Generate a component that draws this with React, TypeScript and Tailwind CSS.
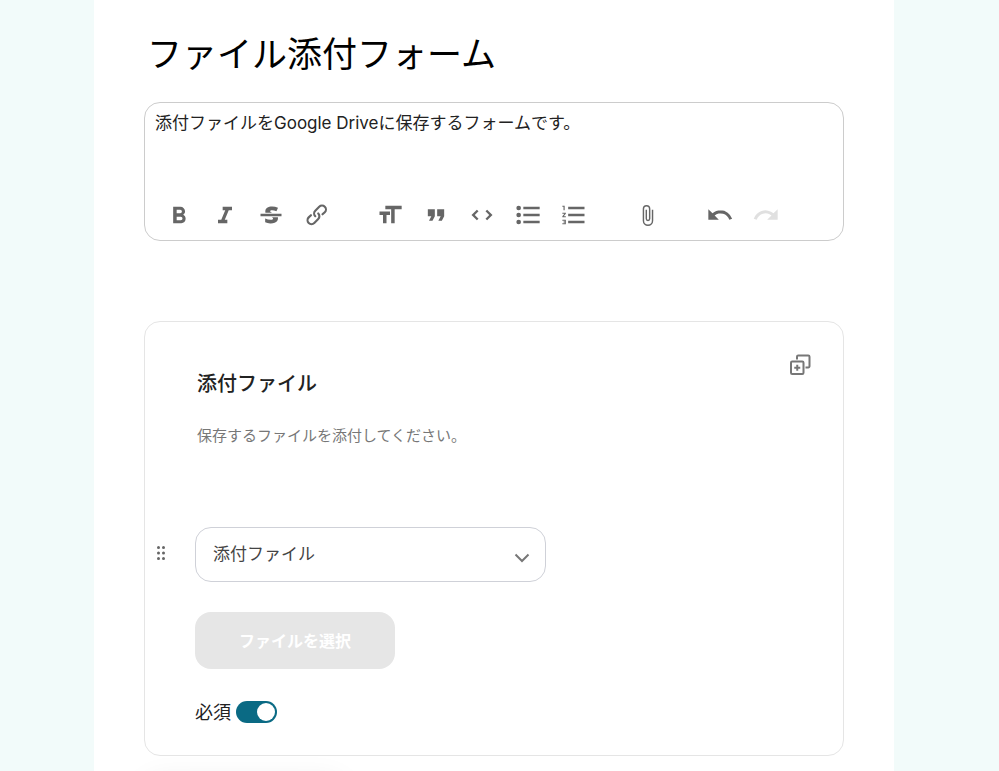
import React, { useState } from 'react';

const ICONS = {
  bold: 'M15.6 11.8c1-.7 1.6-1.8 1.6-2.8a4 4 0 0 0-4-4H7v14h7c2.1 0 3.7-1.7 3.7-3.8 0-1.5-.8-2.8-2.1-3.4zM10 7.5h3a1.5 1.5 0 1 1 0 3h-3v-3zm3.5 9H10v-3h3.5a1.5 1.5 0 1 1 0 3z',
  italic: 'M10 5v3h2.2l-3.4 8H6v3h8v-3h-2.2l3.4-8H18V5h-8z',
  strike: 'M12.73 14l.28.14c.26.15.45.3.57.44.12.14.18.3.18.5 0 .3-.15.56-.44.75-.3.2-.76.3-1.39.3A13.52 13.52 0 0 1 7 14.95v3.37a10.64 10.64 0 0 0 4.84.88c1.26 0 2.35-.19 3.28-.56.93-.37 1.64-.9 2.14-1.57s.74-1.45.74-2.32c0-.26-.02-.51-.06-.75h-5.21zm-5.5-4c-.08-.34-.12-.7-.12-1.1 0-1.29.52-2.3 1.58-3.02 1.05-.72 2.5-1.08 4.34-1.08 1.62 0 3.28.34 4.97 1l-1.3 2.93c-1.47-.6-2.73-.9-3.8-.9-.55 0-.96.08-1.2.26-.26.17-.38.38-.38.64 0 .27.16.52.48.74.17.12.53.3 1.05.53H7.23zM3 13h18v-2H3v2z',
  link: 'M9.88 13.7a4.3 4.3 0 0 1 0-6.07l3.37-3.37a4.26 4.26 0 0 1 6.07 0 4.3 4.3 0 0 1 0 6.06l-1.96 1.72a.91.91 0 1 1-1.3-1.3l1.97-1.71a2.46 2.46 0 0 0-3.48-3.48l-3.38 3.37a2.46 2.46 0 0 0 0 3.48.91.91 0 1 1-1.3 1.3zM4.25 19.46a4.3 4.3 0 0 1 0-6.07l1.93-1.9a.91.91 0 1 1 1.3 1.3l-1.93 1.9a2.46 2.46 0 0 0 3.48 3.48l3.37-3.38c.96-.96.96-2.52 0-3.48a.91.91 0 1 1 1.3-1.3 4.3 4.3 0 0 1 0 6.07l-3.38 3.38a4.26 4.26 0 0 1-6.07 0z',
  heading: 'M12 9v3H9v7H6v-7H3V9h9zM8 4h14v3h-6v12h-3V7H8V4z',
  quote: 'M6 17h3l2-4V7H5v6h3zm8 0h3l2-4V7h-6v6h3z',
  code: 'M18.2 12L15 15.2l1.4 1.4L21 12l-4.6-4.6L15 8.8l3.2 3.2zM5.8 12L9 8.8 7.6 7.4 3 12l4.6 4.6L9 15.2 5.8 12z',
  bullets: 'M4 4a2 2 0 1 0 0 4 2 2 0 0 0 0-4zm0 6a2 2 0 1 0 0 4 2 2 0 0 0 0-4zm0 6a2 2 0 1 0 0 4 2 2 0 0 0 0-4zm4 3h14v-2H8v2zm0-6h14v-2H8v2zm0-8v2h14V5H8z',
  numbers: 'M2 17h2v.5H3v1h1v.5H2v1h3v-4H2v1zm1-9h1V4H2v1h1v3zm-1 3h1.8L2 13.1v.9h3v-1H3.2L5 10.9V10H2v1zm5-6v2h14V5H7zm0 14h14v-2H7v2zm0-6h14v-2H7v2z',
  attach: 'M16.5 6v11.5a4 4 0 1 1-8 0V5a2.5 2.5 0 0 1 5 0v10.5a1 1 0 1 1-2 0V6H10v9.5a2.5 2.5 0 0 0 5 0V5a4 4 0 1 0-8 0v12.5a5.5 5.5 0 0 0 11 0V6h-1.5z',
  undo: 'M12.5 8c-2.6 0-5 1-6.9 2.6L2 7v9h9l-3.6-3.6A8 8 0 0 1 20 16l2.4-.8a10.5 10.5 0 0 0-10-7.2z',
  redo: 'M18.4 10.6a10.5 10.5 0 0 0-16.9 4.6L4 16a8 8 0 0 1 12.7-3.6L13 16h9V7l-3.6 3.6z',
};

type IconName = keyof typeof ICONS;

const GROUPS: { name: IconName; label: string; disabled?: boolean }[][] = [
  [
    { name: 'bold', label: '太字' },
    { name: 'italic', label: '斜体' },
    { name: 'strike', label: '取り消し線' },
    { name: 'link', label: 'リンク' },
  ],
  [
    { name: 'heading', label: '見出し' },
    { name: 'quote', label: '引用' },
    { name: 'code', label: 'コード' },
    { name: 'bullets', label: '箇条書き' },
    { name: 'numbers', label: '番号付きリスト' },
  ],
  [{ name: 'attach', label: 'ファイルを添付' }],
  [
    { name: 'undo', label: '元に戻す' },
    { name: 'redo', label: 'やり直す', disabled: true },
  ],
];

const Toolbar: React.FC = () => (
  <div role="toolbar" className="flex flex-wrap gap-[27px] px-[11px]">
    {GROUPS.map((group, i) => (
      <div key={i} className="flex">
        {group.map((item) => (
          <button
            key={item.name}
            type="button"
            aria-label={item.label}
            disabled={item.disabled}
            className="flex h-7 w-[46px] items-center justify-center text-[#666] disabled:text-[#e0e0e0]"
          >
            {/* the paperclip fills its whole view box, so it is drawn smaller */}
            <svg viewBox="0 0 24 24" className={item.name === 'attach' ? 'size-[23px]' : 'size-7'} fill="currentColor">
              <path d={ICONS[item.name]} />
            </svg>
          </button>
        ))}
      </div>
    ))}
  </div>
);

const FieldCard: React.FC = () => {
  const [title, setTitle] = useState('添付ファイル');
  const [help, setHelp] = useState('保存するファイルを添付してください。');
  const [required, setRequired] = useState(true);

  return (
    <section className="mt-20 flex items-start rounded-2xl border border-[#e5e5e5] pt-8 pb-8">
      <button type="button" aria-label="並べ替え" className="mt-[189px] ml-2 flex w-4 shrink-0 justify-center text-[#666]">
        <svg width="10" height="20" viewBox="0 0 10 20" fill="currentColor">
          <circle cx="2.500" cy="4.500" r="1.500" />
          <circle cx="7.500" cy="4.500" r="1.500" />
          <circle cx="2.500" cy="10" r="1.500" />
          <circle cx="7.500" cy="10" r="1.500" />
          <circle cx="2.500" cy="15.500" r="1.500" />
          <circle cx="7.500" cy="15.500" r="1.500" />
        </svg>
      </button>

      <div className="ml-[26px] flex min-w-0 flex-1 flex-col items-start">
        <div className="flex w-full items-start justify-between pr-8">
          <input
            aria-label="項目名"
            value={title}
            onChange={(e) => setTitle(e.target.value)}
            className="mt-2.5 h-9 min-w-0 flex-1 px-0.5 text-[20px] font-medium text-[#222] outline-none"
          />
          <button type="button" aria-label="項目を複製" className="text-[#777]">
            <svg width="22" height="22" viewBox="0 0 22 22" fill="none" stroke="currentColor" strokeWidth="2">
              <rect x="2" y="7.500" width="12.500" height="12.500" rx="1.200" />
              <path d="M8.250 10.750v6M5.250 13.750h6" />
              <path d="M8 5.500V2.700A1.200 1.200 0 0 1 9.200 1.500H19.300A1.200 1.200 0 0 1 20.500 2.700V12.300A1.200 1.200 0 0 1 19.300 13.500H16.500" />
            </svg>
          </button>
        </div>
        <textarea
          aria-label="項目の説明"
          value={help}
          onChange={(e) => setHelp(e.target.value)}
          className="mt-6 h-[72px] w-full resize-none px-0.5 text-[15px] leading-6 text-[#777] outline-none"
        />

        <div className="relative mt-[31px] w-[351px] max-w-full">
          <select
            aria-label="項目の種類"
            className="h-[55px] w-full appearance-none rounded-2xl border border-[#cfd1d8] bg-white px-[17px] text-[17px] text-[#444] outline-none"
          >
            <option>添付ファイル</option>
          </select>
          <svg
            className="pointer-events-none absolute top-[22px] right-4 text-[#777]"
            width="16"
            height="16"
            viewBox="0 0 16 16"
            fill="none"
            stroke="currentColor"
            strokeWidth="2"
          >
            <path d="M1.500 5.500L8 12l6.500-6.500" />
          </svg>
        </div>

        <button type="button" disabled className="mt-[30px] h-[57px] w-[200px] rounded-2xl bg-[#e6e6e6] text-base font-bold text-white">
          ファイルを選択
        </button>

        <label className="mt-8 flex h-[22px] items-center gap-[5px] text-[18px] text-[#222]">
          必須
          <input
            type="checkbox"
            checked={required}
            onChange={(e) => setRequired(e.target.checked)}
            className="peer sr-only"
          />
          <span className="flex h-[22px] w-[41px] items-center rounded-full bg-gray-300 px-0.5 peer-checked:justify-end peer-checked:bg-[#0a6a84]">
            <span className="size-[18px] rounded-full bg-white" />
          </span>
        </label>
      </div>
    </section>
  );
};

const App: React.FC = () => {
  const [formTitle, setFormTitle] = useState('ファイル添付フォーム');
  const [description, setDescription] = useState('添付ファイルをGoogle Driveに保存するフォームです。');

  return (
    <div className="h-screen overflow-hidden bg-[#f2fbfa] pr-[11px] font-[Inter,'Noto_Sans_CJK_JP',sans-serif]">
      <main className="mx-auto min-h-screen w-full max-w-[800px] bg-white px-[50px] pt-7">
        <input
          aria-label="フォーム名"
          value={formTitle}
          onChange={(e) => setFormTitle(e.target.value)}
          className="h-[52px] w-full px-[3px] text-[35px] text-black outline-none"
        />

        <div className="mt-[22px] rounded-2xl border border-[#ccc] pt-2 pb-[11px]">
          <textarea
            aria-label="フォームの説明"
            value={description}
            onChange={(e) => setDescription(e.target.value)}
            className="block h-[90px] w-full resize-none px-[10px] text-[17px] leading-6 text-[#222] outline-none"
          />
          <Toolbar />
        </div>

        <FieldCard />

        <div className="mt-6 h-14 w-[200px] rounded-2xl bg-white shadow-[0_0_30px_rgba(0,0,0,0.07)]" />
      </main>
    </div>
  );
};

export default App;
